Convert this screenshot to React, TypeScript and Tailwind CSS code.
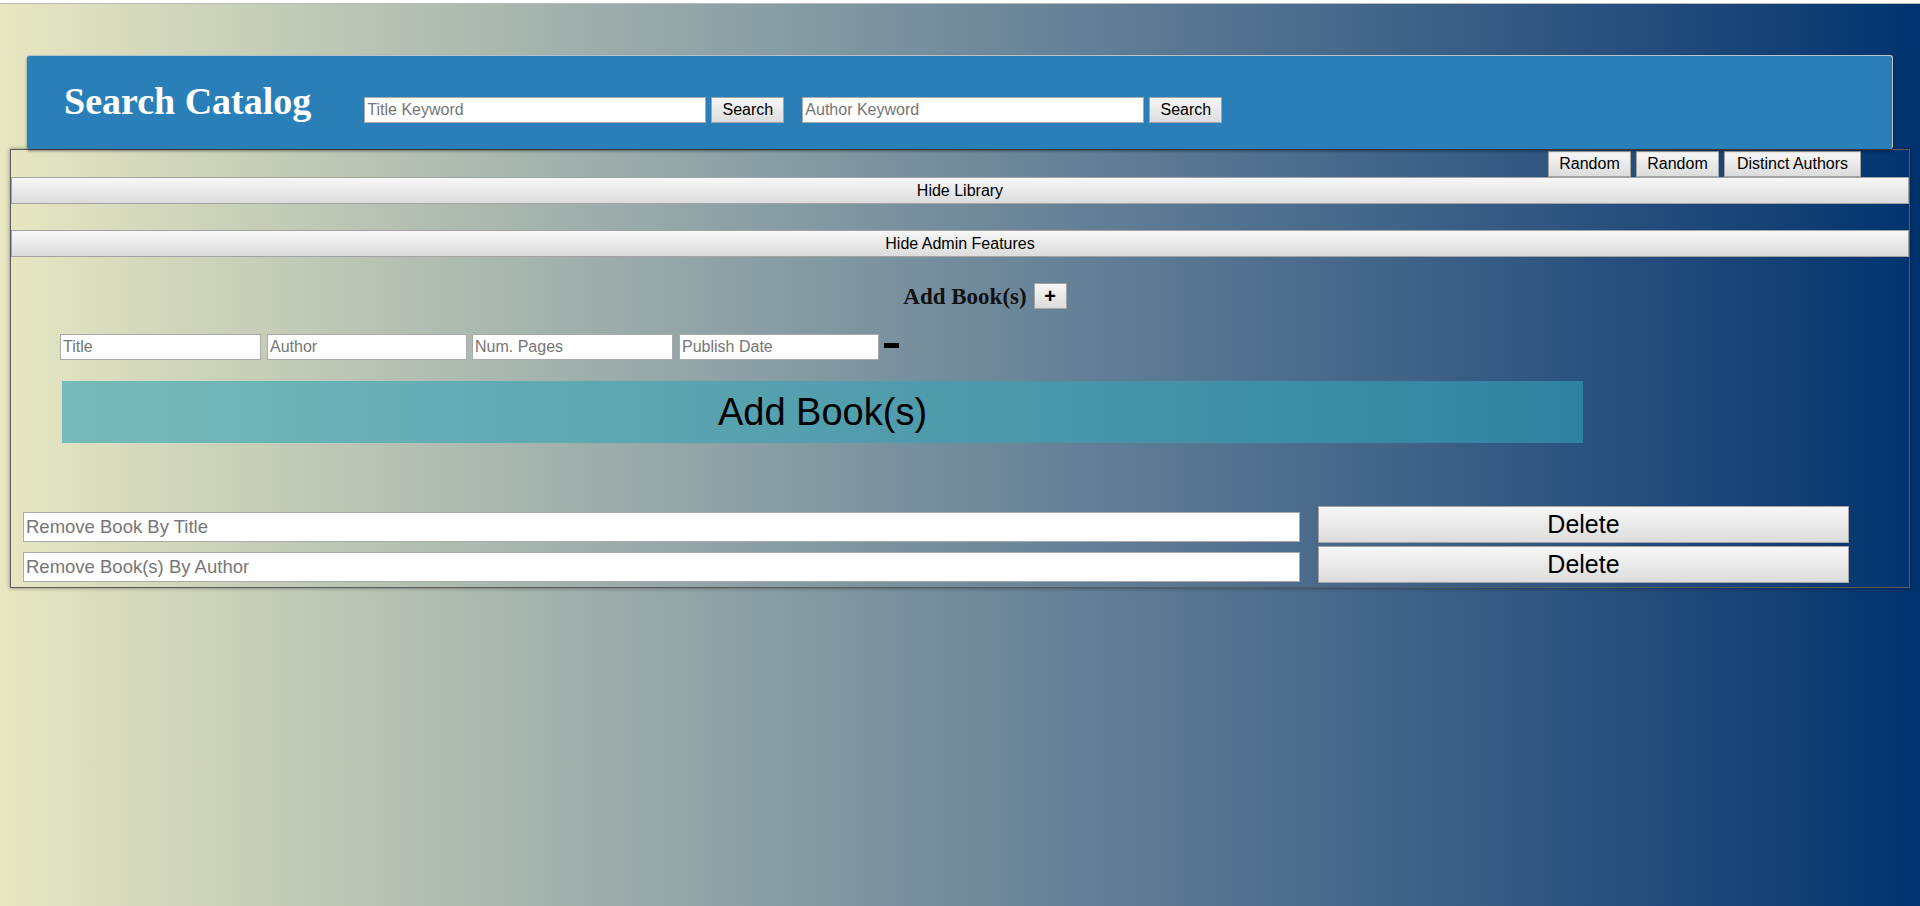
import React from "react";

const btn =
  "bg-gradient-to-b from-[#f7f7f7] to-[#dcdcdc] border border-[#a3a3a3] text-black leading-none";
const field =
  "bg-white border border-[#a9a9a9] text-black placeholder:text-[#767676] px-[2px] outline-none";

export default function App() {
  return (
    <div className="min-h-[906px] w-full bg-gradient-to-r from-[#e7e7c1] to-[#00336e] font-['Liberation_Sans',Arial,sans-serif] pb-[300px]">
      <div className="h-[4px] bg-white border-b border-[#bdbdbd]" />

      {/* header */}
      <div className="mt-[51px] ml-[27px] w-[1866px] h-[94px] bg-[#2a7fb9] rounded-[3px] border-t border-r border-[#b9c3cb] shadow-[0_2px_3px_rgba(0,0,0,0.45)] flex items-start relative z-10">
        <h1 className="ml-[37px] mt-[24px] text-white font-bold text-[38px] leading-[42px] font-['Liberation_Serif','Times_New_Roman',serif] whitespace-nowrap">
          Search Catalog
        </h1>
        <div className="ml-[53px] mt-[41px] flex items-center">
          <input className={`${field} w-[342px] h-[26px] text-[16px]`} placeholder="Title Keyword" />
          <button className={`${btn} ml-[5px] w-[73px] h-[26px] text-[16px]`}>Search</button>
          <input className={`${field} ml-[18px] w-[342px] h-[26px] text-[16px]`} placeholder="Author Keyword" />
          <button className={`${btn} ml-[5px] w-[73px] h-[26px] text-[16px]`}>Search</button>
        </div>
      </div>

      {/* main panel */}
      <div className="ml-[10px] w-[1900px] border border-[#5b5b5b] shadow-[0_0_4px_rgba(0,0,0,0.45)] pb-[4px] flex flex-col">
        <div className="flex justify-end gap-[5px] pr-[48px] pt-[1px]">
          <button className={`${btn} w-[83px] h-[26px] text-[16px]`}>Random</button>
          <button className={`${btn} w-[83px] h-[26px] text-[16px]`}>Random</button>
          <button className={`${btn} w-[137px] h-[26px] text-[16px]`}>Distinct Authors</button>
        </div>

        <button className={`${btn} w-full h-[27px] text-[16px]`}>Hide Library</button>
        <div className="h-[26px]" />
        <button className={`${btn} w-full h-[27px] text-[16px]`}>Hide Admin Features</button>

        <div className="mt-[26px] flex justify-center items-center pl-[50px]">
          <h3 className="text-[23px] font-bold text-[#111] leading-none font-['Liberation_Serif','Times_New_Roman',serif]">
            Add Book(s)
          </h3>
          <button className={`${btn} ml-[7px] w-[33px] h-[26px] text-[20px] font-bold flex items-center justify-center`}>
            +
          </button>
        </div>

        <div className="mt-[25px] ml-[49px] flex items-center">
          <input className={`${field} w-[201px] h-[26px] text-[16px]`} placeholder="Title" />
          <input className={`${field} ml-[6px] w-[200px] h-[26px] text-[16px]`} placeholder="Author" />
          <input className={`${field} ml-[5px] w-[201px] h-[26px] text-[16px]`} placeholder="Num. Pages" />
          <input className={`${field} ml-[6px] w-[200px] h-[26px] text-[16px]`} placeholder="Publish Date" />
          <div className="ml-[5px] mt-[-4px] w-[15px] h-[5px] bg-black" />
        </div>

        <div className="mt-[21px] ml-[51px] w-[1521px] h-[62px] bg-gradient-to-r from-[#76bbbb] to-[#2e83a0] flex items-center justify-center text-black text-[38px]">
          Add Book(s)
        </div>

        <div className="mt-[63px] ml-[12px] flex items-end">
          <input className={`${field} mb-[1px] w-[1277px] h-[30px] text-[18.5px]`} placeholder="Remove Book By Title" />
          <button className={`${btn} ml-[18px] w-[531px] h-[37px] text-[25px]`}>Delete</button>
        </div>
        <div className="mt-[3px] ml-[12px] flex items-end">
          <input className={`${field} mb-[1px] w-[1277px] h-[30px] text-[18.5px]`} placeholder="Remove Book(s) By Author" />
          <button className={`${btn} ml-[18px] w-[531px] h-[37px] text-[25px]`}>Delete</button>
        </div>
      </div>
    </div>
  );
}
